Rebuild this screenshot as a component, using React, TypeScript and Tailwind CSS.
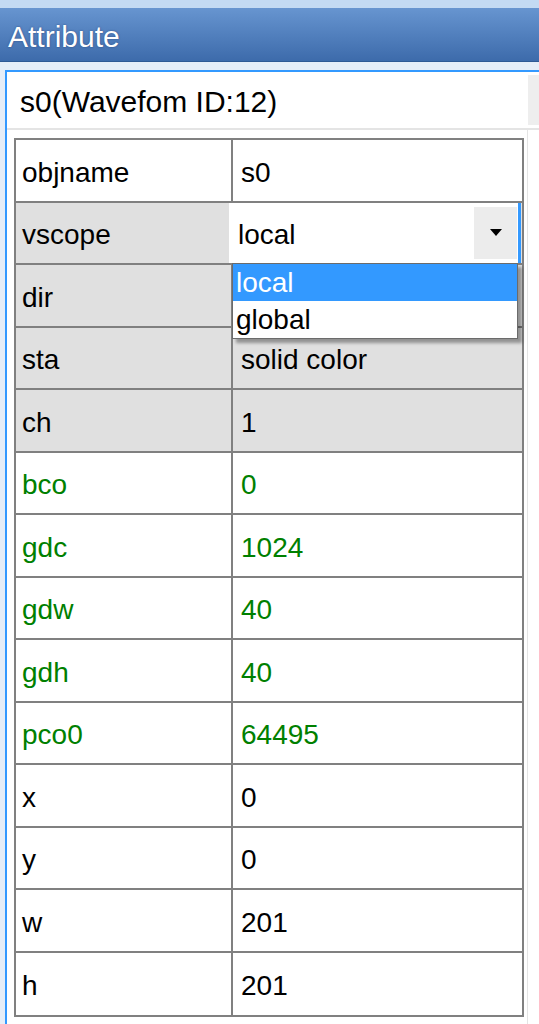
import React from 'react';

type Attr = { name: string; value: string; shaded?: boolean; green?: boolean };

const attrs: Attr[] = [
  { name: 'objname', value: 's0' },
  { name: 'vscope', value: 'local', shaded: true },
  { name: 'dir', value: '', shaded: true },
  { name: 'sta', value: 'solid color', shaded: true },
  { name: 'ch', value: '1', shaded: true },
  { name: 'bco', value: '0', green: true },
  { name: 'gdc', value: '1024', green: true },
  { name: 'gdw', value: '40', green: true },
  { name: 'gdh', value: '40', green: true },
  { name: 'pco0', value: '64495', green: true },
  { name: 'x', value: '0' },
  { name: 'y', value: '0' },
  { name: 'w', value: '201' },
  { name: 'h', value: '201' },
];

// open combo box sitting on top of the vscope value cell
const ScopeCombo: React.FC = () => (
  <>
    <div className="absolute left-[-4px] right-[1px] top-0 h-[60px] z-10 flex items-center bg-white border-r-[3px] border-[#3399ff]">
      <span className="pl-[9px] pt-[4px] flex-1 text-black">local</span>
      <div className="w-[43px] h-[52px] mr-[1px] bg-[#ececec] flex items-center justify-center">
        <svg width="12" height="7" viewBox="0 0 12 7">
          <path d="M0 0h12L6 7z" fill="#000" />
        </svg>
      </div>
    </div>
    <div className="absolute left-[-1px] top-[60px] w-[286px] z-20 bg-white border border-[#6b6b6b] shadow-[4px_4px_3px_rgba(0,0,0,0.35)]">
      <div className="h-[37px] flex items-center pl-[3px] pt-[2px] bg-[#3399ff] text-white">local</div>
      <div className="h-[37px] flex items-center pl-[3px] pt-[2px] text-black">global</div>
    </div>
  </>
);

export default function App() {
  return (
    <div className="w-[539px] h-[1024px] overflow-hidden bg-[#e6eef8] font-['Liberation_Sans',Arial,sans-serif] flex flex-col">
      <div className="h-[8px] bg-[#c3daf3]" />
      <div className="h-[54px] flex items-center pl-[8px] pt-[4px] text-[30px] text-white bg-gradient-to-b from-[#6795d0] to-[#3d6bab] border-b border-[#2f5a95] [text-shadow:0_0_2px_rgba(20,40,90,0.6)]">
        Attribute
      </div>
      <div className="flex-1 pt-[8px] pl-[5px]">
        <div className="h-full bg-white border-l-2 border-t-2 border-[#3399ff] flex flex-col">
          <div className="h-[56px] flex items-center shrink-0">
            <span className="pl-[13px] pt-[2px] flex-1 text-[30px] text-black">s0(Wavefom ID:12)</span>
            <div className="w-[11px] h-[50px] bg-[#eeeeee]" />
          </div>
          <div className="h-[2px] bg-[#e4e4e4] shrink-0" />
          <div className="flex flex-1">
            <div className="ml-[7px] mt-[8px] w-[510px] self-start border-2 border-[#808080] text-[28px]">
              {attrs.map((a, i) => (
                <div
                  key={a.name}
                  className={`flex h-[62.5px] ${i < attrs.length - 1 ? 'border-b-2' : ''} border-[#808080] ${
                    a.shaded ? 'bg-[#e0e0e0]' : 'bg-white'
                  } ${a.green ? 'text-[#008000]' : 'text-black'}`}
                >
                  <div className="w-[217px] shrink-0 border-r-2 border-[#808080] flex items-center pl-[6px] pt-[5px]">
                    {a.name}
                  </div>
                  <div className="relative flex-1 flex items-center pl-[8px] pt-[5px]">
                    {a.name === 'vscope' ? <ScopeCombo /> : a.value}
                  </div>
                </div>
              ))}
            </div>
            <div className="ml-[3px] w-px bg-[#e4e4e4]" />
          </div>
        </div>
      </div>
    </div>
  );
}
